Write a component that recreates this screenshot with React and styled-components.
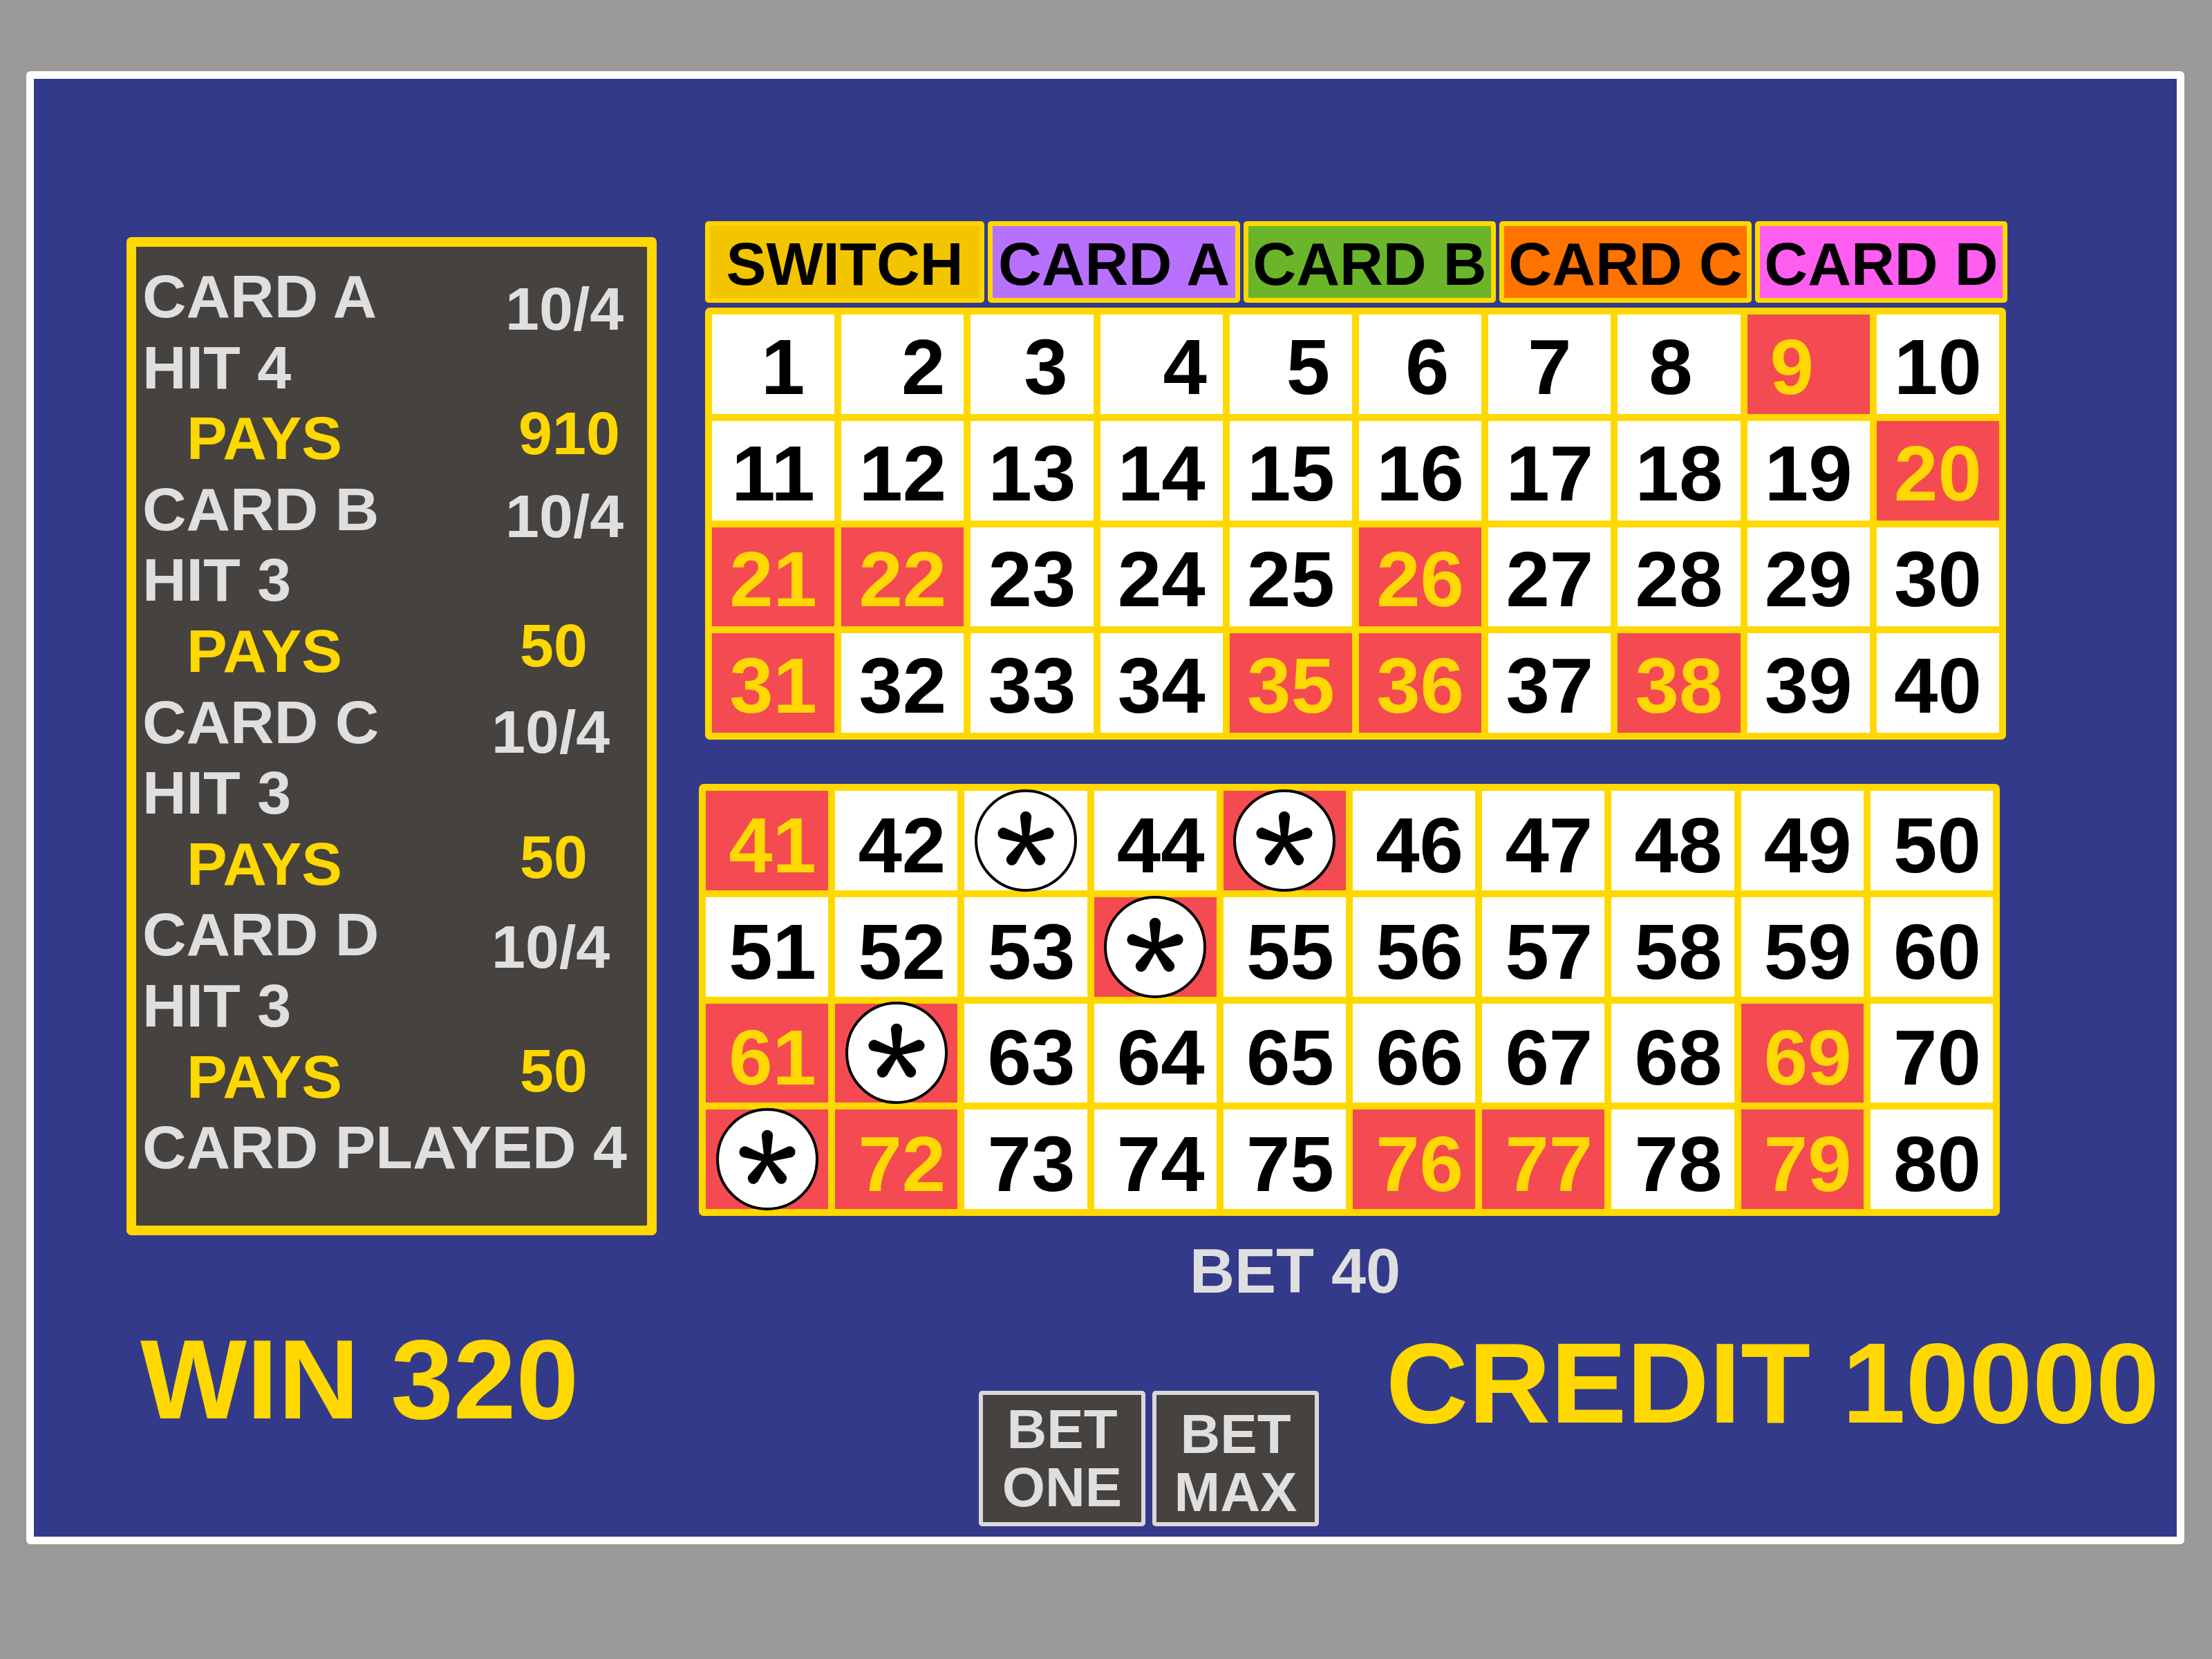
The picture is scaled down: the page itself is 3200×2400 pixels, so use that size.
import React from "react";
import styled, { createGlobalStyle } from "styled-components";

const GlobalStyle = createGlobalStyle`
  html, body {
    margin: 0;
    padding: 0;
    background: #9a9997;
  }
  body {
    font-family: "Liberation Sans", Arial, sans-serif;
  }
  * {
    box-sizing: border-box;
  }
`;

const RED = "#f44a52";
const YELLOW = "#ffd800";
const LIGHT = "#dfdfdf";
const DARK = "#46423f";

const hits = new Set([9, 20, 21, 22, 26, 31, 35, 36, 38, 41, 45, 54, 61, 62, 69, 71, 72, 76, 77, 79]);
const stars = new Set([43, 45, 54, 62, 71]);
// the single digits on the sheet are not quite centred
const digitShift = { 1: 14, 2: 30, 3: 20, 4: 34, 5: 25, 6: 10, 7: 0, 8: -12, 9: -24 };

const tabs = [
  { label: "SWITCH", bg: "#f2c500", edge: "#ffd400", width: 404 },
  { label: "CARD A", bg: "#b871fe", edge: YELLOW, width: 365 },
  { label: "CARD B", bg: "#6bb52b", edge: YELLOW, width: 365 },
  { label: "CARD C", bg: "#ff7300", edge: YELLOW, width: 365 },
  { label: "CARD D", bg: "#ff5ef0", edge: YELLOW, width: 365 },
];

const payRows = [
  { label: "CARD A", value: "10/4", x: 0, shift: 18 },
  { label: "HIT 4" },
  { label: "PAYS", pays: true, value: "910", x: 19, shift: -7 },
  { label: "CARD B", value: "10/4", x: 0, shift: 10 },
  { label: "HIT 3" },
  { label: "PAYS", pays: true, value: "50", x: 21, shift: -8 },
  { label: "CARD C", value: "10/4", x: -20, shift: 14 },
  { label: "HIT 3" },
  { label: "PAYS", pays: true, value: "50", x: 21, shift: -10 },
  { label: "CARD D", value: "10/4", x: -20, shift: 18 },
  { label: "HIT 3" },
  { label: "PAYS", pays: true, value: "50", x: 21, shift: -9 },
];

const Frame = styled.div`
  margin: 103px 0 0 38px;
  width: 3122px;
  height: 2131px;
  border: 11px solid #ffffff;
  border-radius: 6px;
  background: #343a8a;
  overflow: hidden;
`;

const Screen = styled.div`
  height: 100%;
  padding: 206px 0 0 134px;
  display: flex;
  flex-direction: column;
`;

const Top = styled.div`
  display: flex;
  align-items: flex-start;
  gap: 70px;
`;

const PayPanel = styled.div`
  margin-top: 23px;
  width: 767px;
  height: 1444px;
  border: 14px solid ${YELLOW};
  border-radius: 7px;
  background: ${DARK};
  padding: 21px 0 0 9px;
`;

const PayRow = styled.div`
  display: grid;
  grid-template-columns: 525px auto;
  align-items: start;
  height: 102.6px;
  font-size: 88px;
  font-weight: 700;
  line-height: 102.6px;
  white-space: nowrap;
`;

const PayLabel = styled.span`
  grid-column: ${(p) => (p.$wide ? "1 / -1" : "1")};
  padding-left: ${(p) => (p.$pays ? 64 : 0)}px;
  color: ${(p) => (p.$pays ? YELLOW : LIGHT)};
`;

const PayValue = styled.span`
  margin-left: ${(p) => p.$x}px;
  margin-top: ${(p) => p.$shift}px;
  color: ${(p) => (p.$pays ? YELLOW : LIGHT)};
`;

const Board = styled.div`
  width: 1884px;
  display: flex;
  flex-direction: column;
`;

const TabRow = styled.div`
  display: flex;
  gap: 5px;
`;

const Tab = styled.div`
  width: ${(p) => p.$w}px;
  height: 118px;
  display: flex;
  align-items: center;
  justify-content: center;
  padding-top: 4px;
  background: ${(p) => p.$bg};
  border: 7px solid ${(p) => p.$edge};
  border-radius: 5px;
  color: #000;
  font-size: 87px;
  font-weight: 700;
  line-height: 1;
  white-space: nowrap;
`;

const NumberGrid = styled.div`
  margin-top: ${(p) => p.$top}px;
  margin-left: ${(p) => p.$nudge || 0}px;
  width: 1882px;
  height: 625px;
  padding: 10px;
  gap: 10px;
  display: grid;
  grid-template-columns: repeat(10, 1fr);
  grid-template-rows: repeat(4, 1fr);
  background: ${YELLOW};
  border-radius: 7px;
`;

const Cell = styled.div`
  position: relative;
  display: flex;
  align-items: center;
  justify-content: center;
  padding-top: ${(p) => p.$low}px;
  padding-left: ${(p) => Math.max(p.$dx, 0) * 2}px;
  padding-right: ${(p) => Math.max(-p.$dx, 0) * 2}px;
  background: ${(p) => (p.$hit ? RED : "#ffffff")};
  color: ${(p) => (p.$hit ? YELLOW : "#000000")};
  font-size: 114px;
  font-weight: 700;
  line-height: 1;
`;

const Star = styled.div`
  position: absolute;
  left: 50%;
  top: 50%;
  width: 148px;
  height: 148px;
  transform: translate(-50%, -50%);
  border: 4.5px solid #000;
  border-radius: 50%;
  background: #ffffff;
  display: flex;
  align-items: center;
  justify-content: center;
  z-index: 1;
`;

const BetLine = styled.div`
  margin: 35px 0 0 701px;
  font-size: 90px;
  font-weight: 700;
  line-height: 1;
  color: ${LIGHT};
  white-space: nowrap;
`;

const Bottom = styled.div`
  margin-top: 30px;
  padding-left: 20px;
  display: grid;
  grid-template-columns: 1213px 493px 1fr;
  align-items: start;
`;

const BigText = styled.div`
  margin-top: ${(p) => p.$top || 0}px;
  margin-left: ${(p) => p.$left || 0}px;
  font-size: ${(p) => p.$size || 163}px;
  font-weight: 700;
  line-height: 1;
  color: ${YELLOW};
  white-space: nowrap;
`;

const Buttons = styled.div`
  margin-top: 98px;
  display: flex;
  gap: 10px;
`;

const BetButton = styled.div`
  width: 241px;
  height: 196px;
  border: 6px solid #d8d8d8;
  border-radius: 5px;
  background: ${DARK};
  color: ${LIGHT};
  display: flex;
  flex-direction: column;
  align-items: center;
  justify-content: center;
  padding-top: ${(p) => p.$drop || 0}px;
  font-size: 80px;
  font-weight: 700;
  line-height: 84px;
`;

const Asterisk = () => (
  <svg width="96" height="96" viewBox="-50 -50 100 100">
    {[0, 72, 144, 216, 288].map((a) => (
      <path
        key={a}
        d="M -4.5 0 L -8.5 -35.5 A 8.5 8.5 0 0 1 8.5 -35.5 L 4.5 0 Z"
        transform={`rotate(${a})`}
        fill="#000"
      />
    ))}
    <circle r="6" fill="#000" />
  </svg>
);

const Grid = ({ from, top, nudge, low, dx }) => {
  const nums = Array.from({ length: 40 }, (_, i) => from + i);
  return (
    <NumberGrid $top={top} $nudge={nudge}>
      {nums.map((n) => (
        <Cell key={n} $hit={hits.has(n)} $low={low} $dx={digitShift[n] ?? dx}>
          {stars.has(n) ? (
            <Star>
              <Asterisk />
            </Star>
          ) : (
            n
          )}
        </Cell>
      ))}
    </NumberGrid>
  );
};

export default function App() {
  return (
    <>
      <GlobalStyle />
      <Frame>
        <Screen>
          <Top>
            <PayPanel>
              {payRows.map((r, i) => (
                <PayRow key={i}>
                  <PayLabel $pays={r.pays}>{r.label}</PayLabel>
                  {r.value && (
                    <PayValue $pays={r.pays} $x={r.x} $shift={r.shift}>
                      {r.value}
                    </PayValue>
                  )}
                </PayRow>
              ))}
              <PayRow>
                <PayLabel $wide>CARD PLAYED 4</PayLabel>
              </PayRow>
            </PayPanel>
            <Board>
              <TabRow>
                {tabs.map((t) => (
                  <Tab key={t.label} $w={t.width} $bg={t.bg} $edge={t.edge}>
                    {t.label}
                  </Tab>
                ))}
              </TabRow>
              <Grid from={1} top={7} low={8} dx={0} />
              <Grid from={41} top={64} nudge={-9} low={14} dx={8} />
              <BetLine>BET 40</BetLine>
            </Board>
          </Top>
          <Bottom>
            <BigText>WIN 320</BigText>
            <Buttons>
              <BetButton>
                <span>BET</span>
                <span>ONE</span>
              </BetButton>
              <BetButton $drop={14}>
                <span>BET</span>
                <span>MAX</span>
              </BetButton>
            </Buttons>
            <BigText $top={5} $left={96} $size={165}>
              CREDIT 10000
            </BigText>
          </Bottom>
        </Screen>
      </Frame>
    </>
  );
}
